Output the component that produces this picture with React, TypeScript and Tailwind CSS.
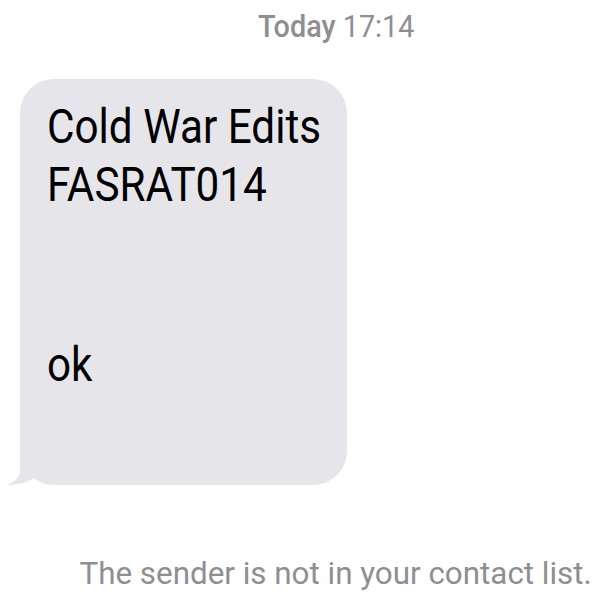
import React from "react";

const App = () => {
  return (
    <main className="flex h-[600px] w-[600px] flex-col overflow-hidden bg-white font-['Roboto',sans-serif]">
      <div className="flex h-[50px] items-center pl-[258px] pt-[2px] text-[32px] text-[#8e8e93]">
        <span className="origin-left scale-x-[0.9] whitespace-nowrap">
          <span className="font-medium">Today</span> 17:14
        </span>
      </div>
      <div className="relative ml-[20px] mt-[29px] h-[406px] w-[327px] rounded-[34px] bg-[#e5e5ea] pl-[27px] pt-[19px] text-[48px] leading-[58px] text-black">
        <svg
          className="absolute bottom-0 left-[-20px]"
          width="44"
          height="45"
          viewBox="0 0 44 45"
        >
          <path
            d="M20 0 L20 30 C20 37 15 42 7 45 C17 45 26 43 34 38 L44 20 L44 0 Z"
            fill="#e5e5ea"
          />
        </svg>
        <div className="relative origin-left scale-x-[0.88] whitespace-nowrap">
          <div>Cold War Edits</div>
          <div>FASRAT014</div>
          <div className="mt-[122px]">ok</div>
        </div>
      </div>
      <div className="mt-[64px] flex justify-end pr-[8px] text-[32px] text-[#8e8e93]">
        <span className="origin-right scale-x-[0.98] whitespace-nowrap">
          The sender is not in your contact list.
        </span>
      </div>
    </main>
  );
};

export default App;
